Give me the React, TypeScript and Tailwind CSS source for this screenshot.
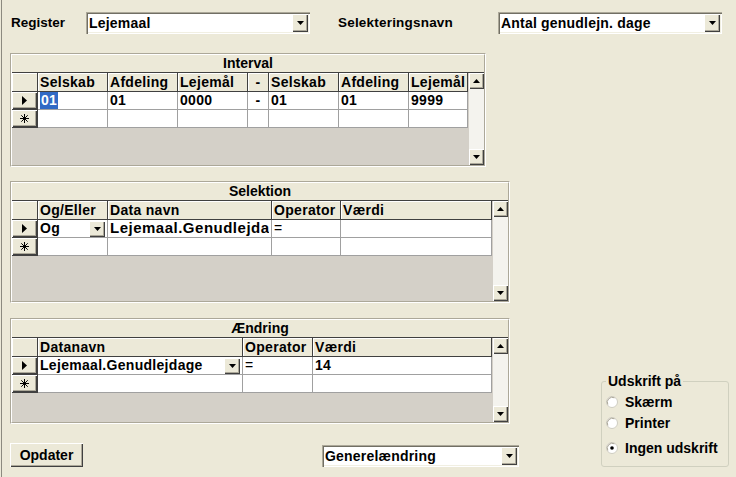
import React from "react";

// classic win32 3d edges
const raised =
  "bg-[#ece9d8] shadow-[inset_1px_1px_0_#ffffff,inset_-1px_-1px_0_#404040,inset_-2px_-2px_0_#aca899]";
const sunken =
  "bg-white shadow-[inset_1px_1px_0_#aca899,inset_2px_2px_0_#716f64,inset_-1px_-1px_0_#ffffff,inset_-2px_-2px_0_#f1efe2]";

function Arrow({ up = false }: { up?: boolean }) {
  return (
    <svg width="7" height="4" viewBox="0 0 7 4" className="block">
      <path d={up ? "M0 4h7L3.5 0z" : "M0 0h7L3.5 4z"} fill="#000" />
    </svg>
  );
}

function DropButton({ className = "" }: { className?: string }) {
  return (
    <div className={`${raised} flex shrink-0 items-center justify-center ${className}`}>
      <Arrow />
    </div>
  );
}

function Combo({ value, className }: { value: string; className: string }) {
  return (
    <div className={`${sunken} flex p-[2px] ${className}`}>
      <span className="flex flex-1 items-center truncate pl-px text-[14px] font-bold tracking-[0.2px]">{value}</span>
      <DropButton className="w-[16px]" />
    </div>
  );
}

function Scrollbar() {
  return (
    <div className="flex w-[16px] shrink-0 flex-col border-l border-[#d4d0c8] bg-[#f4f3ee]">
      <div className={`h-[16px] ${raised} flex items-center justify-center`}>
        <Arrow up />
      </div>
      <div className="flex-1" />
      <div className={`h-[16px] ${raised} flex items-center justify-center`}>
        <Arrow />
      </div>
    </div>
  );
}

function RowMarker() {
  return (
    <svg width="5" height="9" viewBox="0 0 5 9">
      <path d="M0 0l5 4.5L0 9z" fill="#000" />
    </svg>
  );
}

function NewRowMarker() {
  return (
    <svg width="9" height="9" viewBox="0 0 9 9" stroke="#000" strokeWidth="1">
      <path d="M4.5 0v9M0 4.5h9M1.3 1.3l6.4 6.4M7.7 1.3l-6.4 6.4" />
    </svg>
  );
}

type Col = { w: string; label: string; center?: boolean };

function Grid({
  title,
  frame,
  cols,
  cells,
}: {
  title: string;
  frame: string;
  cols: Col[];
  cells: React.ReactNode[];
}) {
  return (
    <div
      className={`${frame} flex flex-col border border-t-[#aca899] border-l-[#aca899] border-r-white border-b-white`}
    >
      <div className="flex min-h-0 flex-1 flex-col border border-t-white border-l-white border-r-[#aca899] border-b-[#aca899]">
        <div className="h-[18px] shrink-0 border-b border-[#404040] bg-[#ece9d8] text-center text-[14px] font-bold leading-[17px]">
          {title}
        </div>
        <div className="flex min-h-0 flex-1">
          <div className="flex flex-1 flex-col bg-[#d4d0c8]">
            {/* header */}
            <div className="flex h-[19px] bg-[#ece9d8] text-[14px] font-bold tracking-[0.3px]">
              <div className="w-[26px] shrink-0 border-r border-b border-[#404040] shadow-[inset_1px_1px_0_#fff]" />
              {cols.map((c, i) => (
                <div
                  key={i}
                  className={`${c.w} shrink-0 overflow-hidden whitespace-nowrap border-r border-b border-[#404040] px-[2px] leading-[18px] shadow-[inset_1px_1px_0_#fff] ${c.center ? "text-center" : ""}`}
                >
                  {c.label}
                </div>
              ))}
            </div>
            {/* current row */}
            <div className="flex h-[18px] text-[14px] font-bold tracking-[0.3px]">
              <div className={`w-[26px] shrink-0 border-r border-b border-[#404040] ${raised} flex items-center justify-center`}>
                <RowMarker />
              </div>
              {cols.map((c, i) => (
                <div
                  key={i}
                  className={`${c.w} flex shrink-0 items-center overflow-hidden whitespace-nowrap border-r border-b border-[#a0a0a0] bg-white px-[2px] ${c.center ? "justify-center" : ""}`}
                >
                  {cells[i]}
                </div>
              ))}
            </div>
            {/* new row */}
            <div className="flex h-[18px]">
              <div className={`w-[26px] shrink-0 border-r border-b border-[#404040] ${raised} flex items-center justify-center`}>
                <NewRowMarker />
              </div>
              {cols.map((c, i) => (
                <div key={i} className={`${c.w} shrink-0 border-r border-b border-[#a0a0a0] bg-white`} />
              ))}
            </div>
          </div>
          <Scrollbar />
        </div>
      </div>
    </div>
  );
}

function CellCombo({ text }: { text: string }) {
  return (
    <div className="flex h-full w-full items-center">
      <span className="flex-1 overflow-hidden">{text}</span>
      <DropButton className="h-[16px] w-[16px]" />
    </div>
  );
}

function Radio({ checked = false }: { checked?: boolean }) {
  return (
    <svg width="12" height="12" viewBox="0 0 12 12" className="shrink-0">
      <circle cx="6" cy="6" r="5.5" fill="#fff" stroke="#cfcdc2" />
      <path d="M1.8 8.5A5 5 0 0 1 8.5 1.8" fill="none" stroke="#aca899" />
      {checked && <circle cx="6" cy="6" r="1.8" fill="#000" />}
    </svg>
  );
}

export default function App() {
  return (
    <div className="flex h-[477px] w-[736px] overflow-hidden bg-[#ece9d8] font-['Liberation_Sans',Arial,sans-serif] text-black">
      <div className="w-px" />
      <div className="w-px bg-[#8c8a80]" />
      <div className="flex flex-1 flex-col pl-[8px] pt-[12px]">
        <div className="flex h-[22px] items-center">
          <span className="w-[76px] pl-px text-[13.5px] font-bold">Register</span>
          <Combo value="Lejemaal" className="h-[22px] w-[224px]" />
          <span className="ml-[28px] w-[160px] text-[13.5px] font-bold tracking-[0.2px]">Selekteringsnavn</span>
          <Combo value="Antal genudlejn. dage" className="h-[22px] w-[224px]" />
        </div>

        <div className="mt-[19px] flex">
          <div className="flex w-[509px] flex-col">
            <Grid
              title="Interval"
              frame="w-[476px] h-[114px]"
              cols={[
                { w: "w-[70px]", label: "Selskab" },
                { w: "w-[70px]", label: "Afdeling" },
                { w: "w-[70px]", label: "Lejemål" },
                { w: "w-[21px]", label: "-", center: true },
                { w: "w-[70px]", label: "Selskab" },
                { w: "w-[70px]", label: "Afdeling" },
                { w: "w-[59px]", label: "Lejemål" },
              ]}
              cells={[
                <span className="bg-[#316ac5] px-px text-white">01</span>,
                "01",
                "0000",
                "-",
                "01",
                "01",
                "9999",
              ]}
            />

            <Grid
              title="Selektion"
              frame="mt-[14px] w-[500px] h-[122px]"
              cols={[
                { w: "w-[70px]", label: "Og/Eller" },
                { w: "w-[164px]", label: "Data navn" },
                { w: "w-[69px]", label: "Operator" },
                { w: "w-[151px]", label: "Værdi" },
              ]}
              cells={[
                <CellCombo text="Og" />,
                <span className="block w-full overflow-hidden text-[15px] tracking-[0.5px]">Lejemaal.Genudlejdage</span>,
                <span className="font-normal">=</span>,
                "",
              ]}
            />

            <Grid
              title="Ændring"
              frame="mt-[15px] w-[500px] h-[106px]"
              cols={[
                { w: "w-[205px]", label: "Datanavn" },
                { w: "w-[70px]", label: "Operator" },
                { w: "w-[179px]", label: "Værdi" },
              ]}
              cells={[<CellCombo text="Lejemaal.Genudlejdage" />, <span className="font-normal">=</span>, "14"]}
            />

            <div className="mt-[19px] flex items-start">
              <button
                type="button"
                className={`${raised} h-[24px] w-[73px] text-[14px] font-bold`}
              >
                Opdater
              </button>
              <Combo value="Generelændring" className="ml-[239px] mt-[2px] h-[22px] w-[197px]" />
            </div>
          </div>

          <div className="ml-[82px] flex flex-col justify-end">
            <fieldset className="h-[94px] w-[128px] rounded-[3px] border border-[#d0d0bf] pl-[4px] text-[14px] font-bold">
              <legend className="px-[2px] leading-[16px]">Udskrift på</legend>
              <div className="mt-[3px] flex h-[20px] items-center gap-[7px]">
                <Radio />
                <span>Skærm</span>
              </div>
              <div className="mt-px flex h-[20px] items-center gap-[7px]">
                <Radio />
                <span>Printer</span>
              </div>
              <div className="mt-[5px] flex h-[20px] items-center gap-[7px]">
                <Radio checked />
                <span>Ingen udskrift</span>
              </div>
            </fieldset>
          </div>
        </div>
      </div>
    </div>
  );
}
